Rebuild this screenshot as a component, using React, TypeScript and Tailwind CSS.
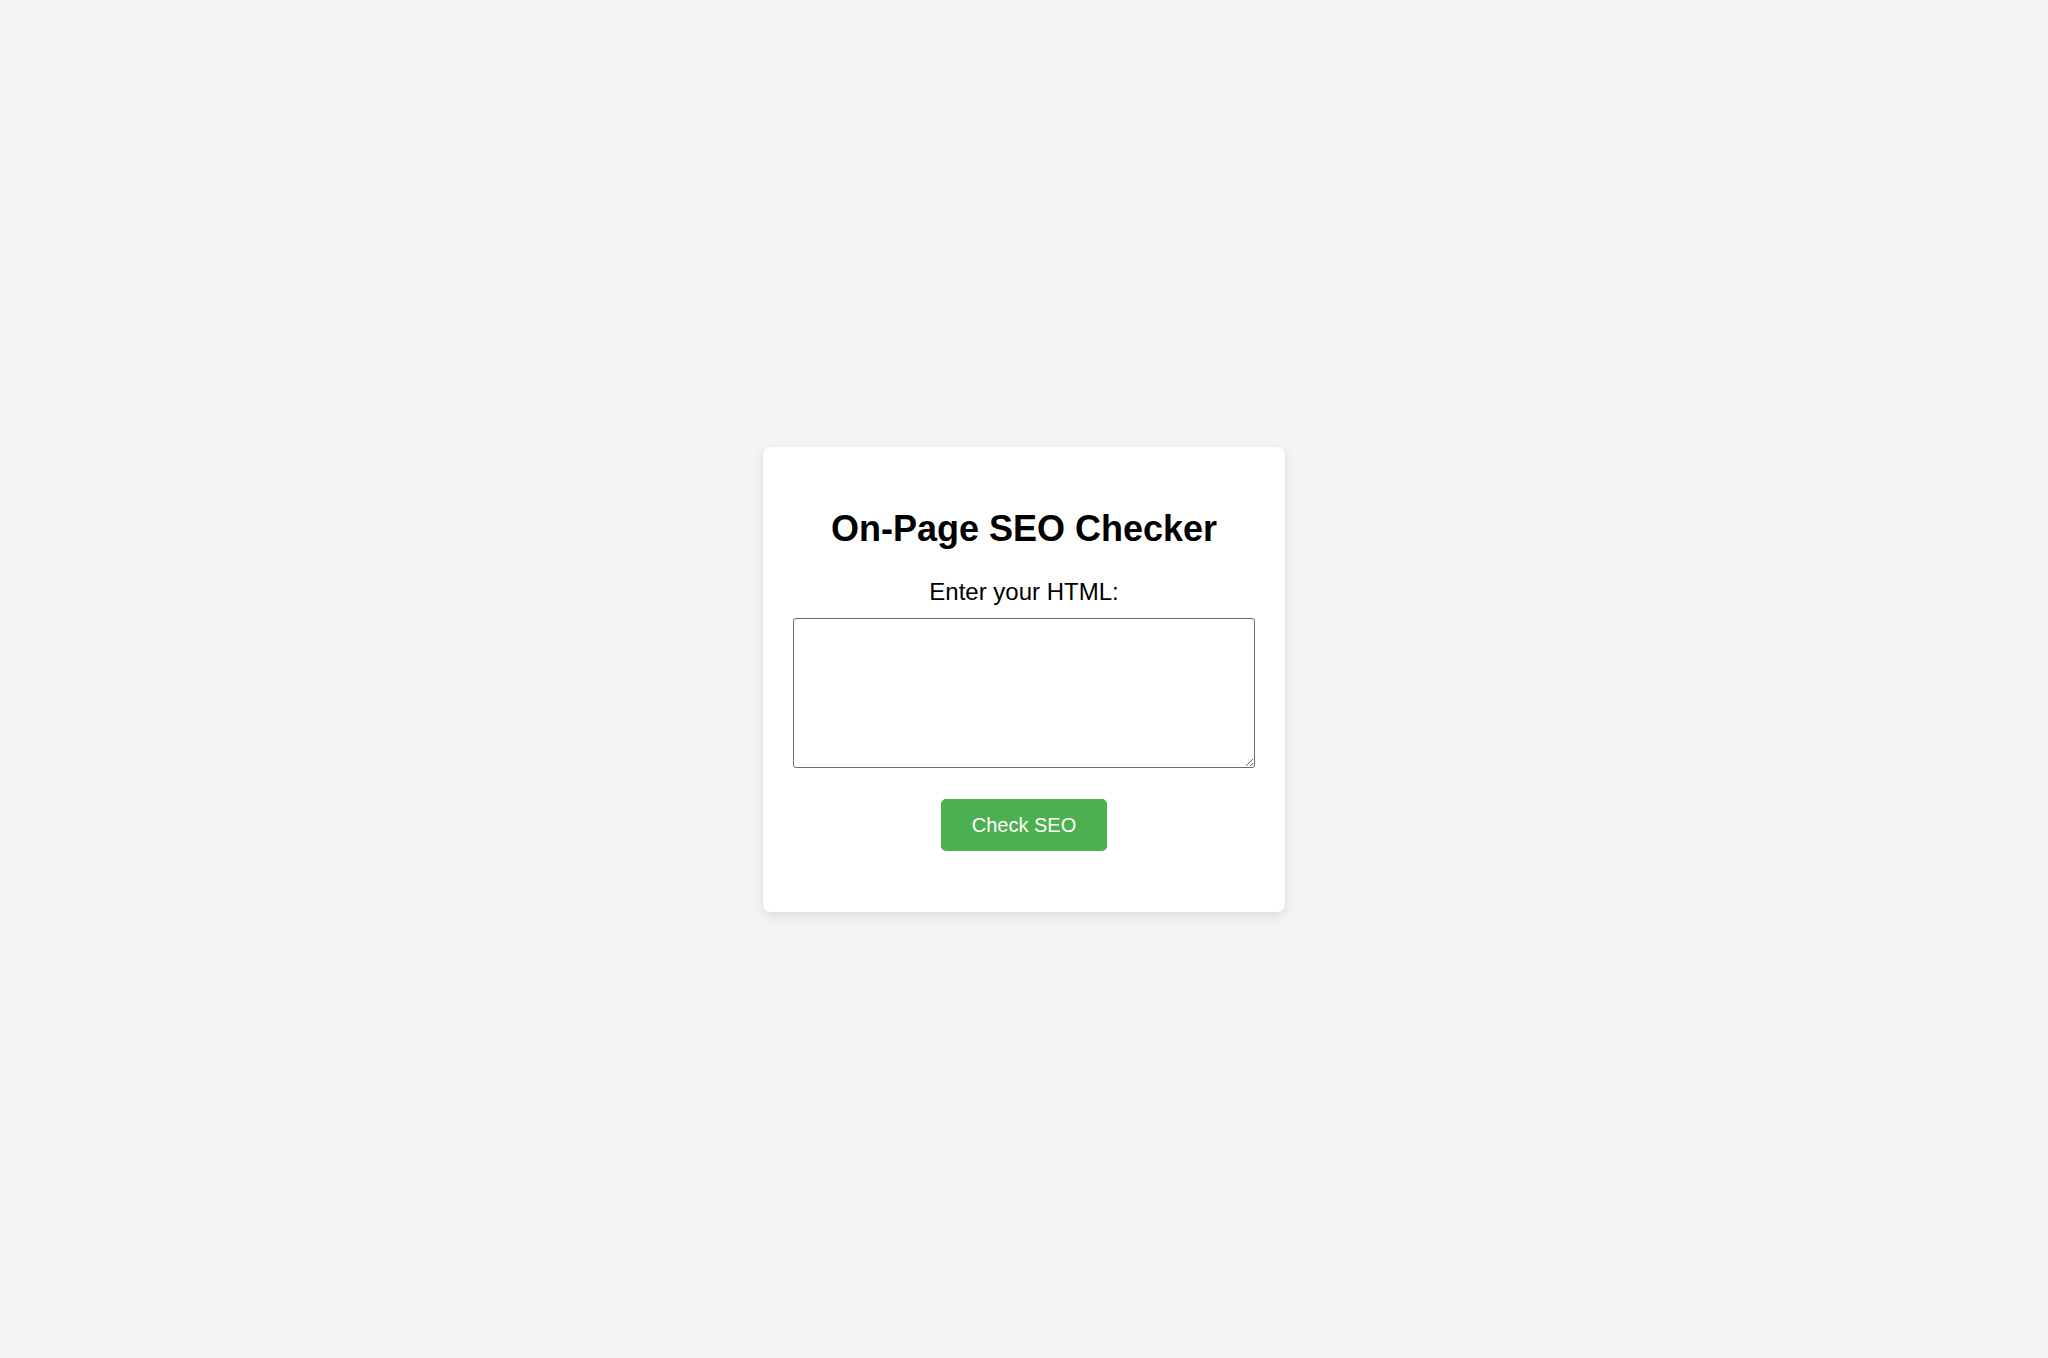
import { useState } from 'react';

export default function App() {
    const [html, setHtml] = useState('');

    return (
        <div className="flex min-h-screen items-center justify-center bg-[#f4f4f4] font-['Liberation_Sans',Arial,sans-serif] text-black">
            {/* Card */}
            <div className="w-[522px] rounded-lg bg-white px-[30px] pt-[61px] pb-[61px] text-center shadow-[0_4px_12px_rgba(0,0,0,0.1)]">
                <h1 className="mb-[29px] text-[36px] font-bold leading-[41px]">On-Page SEO Checker</h1>
                <label htmlFor="html-input" className="mb-[12px] block text-[24px] leading-[28px]">
                    Enter your HTML:
                </label>
                <textarea
                    id="html-input"
                    value={html}
                    onChange={(e) => setHtml(e.target.value)}
                    className="block h-[150px] w-full rounded-[3px] border border-[#6e6e6e] bg-white p-[3px] text-[16px]"
                />
                <button
                    type="button"
                    className="mt-[31px] h-[52px] rounded-[5px] bg-[#4caf50] px-[31px] text-[20px] text-white"
                >
                    Check SEO
                </button>
            </div>
        </div>
    );
}
